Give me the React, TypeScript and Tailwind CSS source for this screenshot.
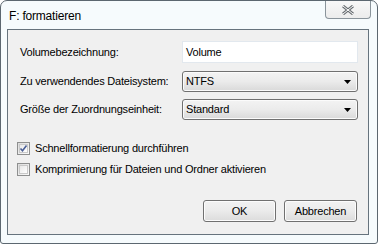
import React from "react";

const font = { fontFamily: '"Liberation Sans", Arial, sans-serif' };

function Combo({ value }: { value: string }) {
  return (
    <div className="w-[176px] h-[21px] rounded-[3px] border border-[#707070] bg-gradient-to-b from-[#f3f3f3] via-[#ebebeb] to-[#d9d9d9] flex items-center justify-between pl-[3px] pr-[6px] shadow-[inset_0_0_0_1px_#fbfbfb]">
      <span className="text-[11px] tracking-[-0.2px] text-black">{value}</span>
      <svg width="7" height="4" viewBox="0 0 7 4">
        <path d="M0 0 H7 L3.5 4 Z" fill="#000" />
      </svg>
    </div>
  );
}

function Check({ checked, label }: { checked: boolean; label: string }) {
  return (
    <div className="flex items-center h-[13px] gap-[5px]">
      <div className="w-[13px] h-[13px] border border-[#8e8f8f] bg-gradient-to-br from-[#dcdcdc] to-[#fbfbfb] flex items-center justify-center">
        <div className="w-[9px] h-[9px] border border-[#c9c9c9] bg-gradient-to-br from-[#e8e8e8] to-[#ffffff] flex items-center justify-center">
          {checked && (
            <svg width="9" height="9" viewBox="0 0 9 9" className="-m-px">
              <path d="M1.5 4.5 L3.5 6.8 L7.5 1.5" stroke="#4a5f97" strokeWidth="1.6" fill="none" />
            </svg>
          )}
        </div>
      </div>
      <span className="text-[11px] tracking-[-0.2px] text-black">{label}</span>
    </div>
  );
}

function Btn({ label }: { label: string }) {
  return (
    <div className="w-[73px] h-[22px] rounded-[3px] border border-[#707070] bg-gradient-to-b from-[#f2f2f2] via-[#ebebeb] to-[#dcdcdc] shadow-[inset_0_0_0_1px_#fcfcfc] flex items-center justify-center text-[11px] tracking-[-0.2px] text-black">
      {label}
    </div>
  );
}

export default function App() {
  return (
    <div style={font} className="w-[378px] h-[244px] bg-white">
      <div className="w-[378px] h-[244px] border border-[#5c6770] rounded-t-[7px] rounded-b-[3px] bg-[#f6fbfd] flex flex-col">
        <div className="h-[28px] flex items-start justify-between shrink-0">
          <span className="pl-[8px] pt-[9px] text-[12px] tracking-[-0.2px] text-black leading-none">F: formatieren</span>
          <div className="mr-[6px] w-[46px] h-[18px] rounded-b-[4px] border border-t-0 border-[#8a949b] bg-gradient-to-b from-[#f8f8f8] to-[#ececec] flex items-center justify-center">
            <svg width="12" height="10" viewBox="0 0 12 10">
              <path d="M1 1 L11 9 M11 1 L1 9" stroke="#6a6f73" strokeWidth="3" />
              <path d="M1 1 L11 9 M11 1 L1 9" stroke="#ffffff" strokeWidth="1" />
            </svg>
          </div>
        </div>
        <div className="ml-[6px] mr-[8px] mb-[8px] flex-1 border border-[#66737d] bg-[#f0f0f0] flex flex-col pl-[12px] pr-[10px] pt-[11px]">
          <div className="flex items-center justify-between h-[22px]">
            <span className="text-[11px] tracking-[-0.2px] text-black">Volumebezeichnung:</span>
            <div className="w-[176px] h-[22px] bg-white border border-[#e2e8ee] flex items-center pl-[3px] text-[11px] tracking-[-0.2px] text-black">
              Volume
            </div>
          </div>
          <div className="flex items-center justify-between h-[21px] mt-[8px]">
            <span className="text-[11px] tracking-[-0.2px] text-black">Zu verwendendes Dateisystem:</span>
            <Combo value="NTFS" />
          </div>
          <div className="flex items-center justify-between h-[21px] mt-[7px]">
            <span className="text-[11px] tracking-[-0.2px] text-black">Größe der Zuordnungseinheit:</span>
            <Combo value="Standard" />
          </div>
          <div className="flex flex-col gap-[8px] mt-[22px] -ml-[3px]">
            <Check checked label="Schnellformatierung durchführen" />
            <Check checked={false} label="Komprimierung für Dateien und Ordner aktivieren" />
          </div>
          <div className="flex justify-end gap-[8px] mt-[24px] pr-[1px]">
            <Btn label="OK" />
            <Btn label="Abbrechen" />
          </div>
        </div>
      </div>
    </div>
  );
}
